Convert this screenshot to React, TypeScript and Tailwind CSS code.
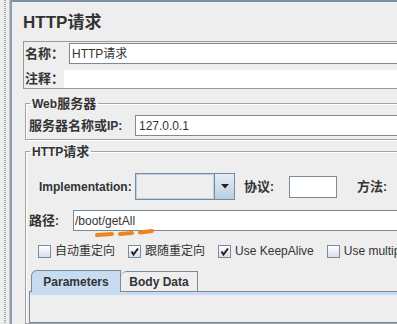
import React from "react";

function Check({ checked }: { checked?: boolean }) {
  return (
    <div className="w-[13px] h-[13px] shrink-0 border border-[#7a8a99] bg-[linear-gradient(to_bottom,#ffffff,#d4dfeb)] relative">
      {checked && (
        <svg width="11" height="11" viewBox="0 0 11 11" className="absolute left-0 top-0">
          <path d="M2.5 5.5 L4.5 8.5 L9 2.5" fill="none" stroke="#222" strokeWidth="2" />
        </svg>
      )}
    </div>
  );
}

function CheckItem({ checked, children }: { checked?: boolean; children: React.ReactNode }) {
  return (
    <div className="flex items-center gap-[4px]">
      <Check checked={checked} />
      <span className="text-[12px] leading-[13px] whitespace-nowrap">{children}</span>
    </div>
  );
}

export default function App() {
  return (
    <div className="w-[397px] h-[324px] overflow-hidden bg-[#eeeeee] flex text-[#333333] font-['Liberation_Sans','Noto_Sans_CJK_SC',sans-serif]">
      {/* split pane divider */}
      <div className="w-[12px] h-full flex shrink-0">
        <div className="w-[4px]" />
        <div className="w-[2px] h-full bg-[repeating-linear-gradient(to_bottom,#a8a8a8_0px,#a8a8a8_1px,transparent_1px,transparent_2px)]" />
        <div className="w-[3px]" />
        <div className="w-[1px] h-full bg-[#c4c4c4]" />
        <div className="w-[2px] h-full bg-[#8c9cac]" />
      </div>

      <div className="w-[430px] shrink-0 border-t-2 border-[#7f8f9f] pl-[11px] flex flex-col">
        <div className="mt-[11px] h-[20px] leading-[20px] text-[17px] font-bold">HTTP请求</div>

        {/* name / comment box */}
        <div className="mt-[8px] border-t border-l border-b border-[#9a9a9a] flex flex-col">
          <div className="pt-[1px] flex items-center">
            <div className="w-[45px] pl-[1px] text-[13px] font-bold leading-[16px]">名称：</div>
            <div className="flex-1 h-[21px] border border-[#7a8a99] bg-white flex items-center pl-[2px] text-[12px]">HTTP请求</div>
          </div>
          <div className="mt-[6px] flex items-center">
            <div className="w-[40px] pl-[1px] text-[13px] font-bold leading-[16px]">注释：</div>
            <div className="flex-1 h-[18px] bg-white" />
          </div>
        </div>

        {/* Web server group */}
        <fieldset className="mt-[8px] ml-[2px] border border-[#a3a3a3] shadow-[inset_1px_1px_0_#ffffff,1px_1px_0_#ffffff]">
          <legend className="ml-[4px] px-[2px] h-[13px] leading-[13px] font-bold text-[13px]">
            <span className="text-[12px]">Web</span>服务器
          </legend>
          <div className="mt-[5px] pb-[3px] flex items-center">
            <div className="w-[109px] pl-[3px] text-[13px] font-bold leading-[16px] whitespace-nowrap">
              服务器名称或<span className="text-[12px]">IP:</span>
            </div>
            <div className="flex-1 h-[21px] border border-[#7a8a99] bg-white flex items-center pl-[3px] text-[12px]">127.0.0.1</div>
          </div>
        </fieldset>

        {/* HTTP request group */}
        <fieldset className="mt-[5px] ml-[2px] h-[300px] border border-[#a3a3a3] shadow-[inset_1px_1px_0_#ffffff]">
          <legend className="ml-[4px] px-[2px] h-[13px] leading-[13px] font-bold text-[13px]">
            <span className="text-[12px]">HTTP</span>请求
          </legend>

          <div className="mt-[15px] flex items-center">
            <div className="w-[109px] pl-[13px] text-[12px] font-bold">Implementation:</div>
            <div className="flex h-[27px]">
              <div className="w-[80px] h-full border border-[#7a8a99] shadow-[inset_0_0_0_1px_#bcd0e6] bg-[#eeeeee]" />
              <div className="w-[20px] h-full border border-l-0 border-[#7a8a99] bg-[linear-gradient(to_bottom,#e6eef7,#b9cde3)] flex items-center justify-center">
                <svg width="8" height="5" viewBox="0 0 8 5">
                  <path d="M0 0 L8 0 L4 4.5 Z" fill="#222" />
                </svg>
              </div>
            </div>
            <div className="ml-[9px] w-[45px] text-[13px] font-bold leading-[16px]">
              协议<span className="text-[12px]">:</span>
            </div>
            <div className="w-[48px] h-[22px] border border-[#7a8a99] bg-white" />
            <div className="ml-[20px] text-[13px] font-bold leading-[16px]">
              方法<span className="text-[12px]">:</span>
            </div>
          </div>

          <div className="mt-[10px] flex items-center relative">
            <div className="w-[47px] pl-[3px] text-[13px] font-bold leading-[16px]">
              路径<span className="text-[12px]">:</span>
            </div>
            <div className="flex-1 h-[21px] border border-[#7a8a99] bg-white flex items-center pl-[1px] text-[12px]">/boot/getAll</div>
            <svg width="64" height="12" viewBox="0 0 64 12" className="absolute left-[67px] top-[17px]">
              <g stroke="#f0841c" strokeWidth="4" strokeLinecap="round">
                <line x1="4" y1="8" x2="19" y2="7" />
                <line x1="27" y1="7" x2="39" y2="6" />
                <line x1="47" y1="5.5" x2="59" y2="4" />
              </g>
            </svg>
          </div>

          <div className="mt-[14px] pl-[12px] flex items-center gap-[13px]">
            <CheckItem>自动重定向</CheckItem>
            <CheckItem checked>跟随重定向</CheckItem>
            <CheckItem checked>Use KeepAlive</CheckItem>
            <CheckItem>Use multipart/form-data</CheckItem>
          </div>

          <div className="mt-[12px] ml-[3px] flex flex-col">
            <div className="flex items-end h-[22px] pl-[2px] relative z-10 -mb-px">
              <div className="w-[90px] h-[22px] bg-[#c8dcf1] border-t border-l border-r border-[#7a8a99] rounded-tl-[6px] flex items-center justify-center text-[12px] font-bold">
                Parameters
              </div>
              <div className="w-[77px] h-[21px] bg-[#eeeeee] border-t border-r border-b border-[#7a8a99] rounded-tl-[6px] flex items-center justify-center text-[12px] font-bold">
                Body Data
              </div>
            </div>
            <div className="h-[32px] border border-[#7a8a99] flex flex-col">
              <div className="h-[3px] bg-[#c8dcf1]" />
            </div>
          </div>
        </fieldset>
      </div>
    </div>
  );
}
